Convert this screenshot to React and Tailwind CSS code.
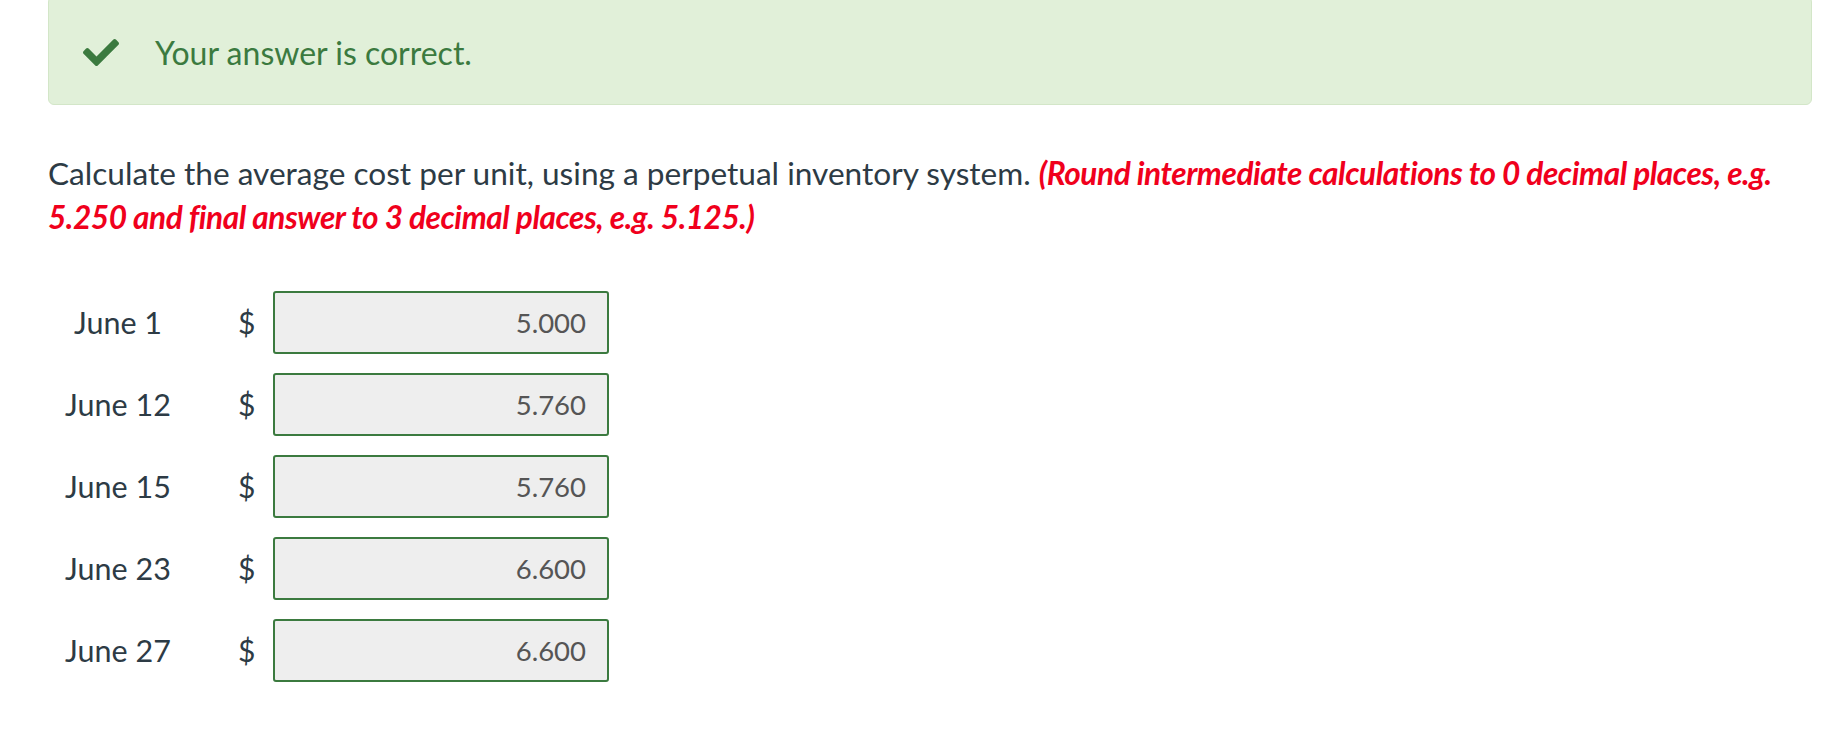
import React from 'react'

const rows = [
  { label: 'June 1', value: '5.000' },
  { label: 'June 12', value: '5.760' },
  { label: 'June 15', value: '5.760' },
  { label: 'June 23', value: '6.600' },
  { label: 'June 27', value: '6.600' },
]

function CheckIcon() {
  return (
    <svg viewBox="0 64 512 384" className="h-[27px] w-[36px]" fill="#3b7a3f">
      <path d="M173.898 439.404l-166.4-166.4c-9.997-9.997-9.997-26.206 0-36.204l36.203-36.204c9.997-9.998 26.207-9.998 36.204 0L192 312.69 432.095 72.596c9.997-9.997 26.207-9.997 36.204 0l36.203 36.204c9.997 9.997 9.997 26.206 0 36.204l-294.4 294.401c-9.998 9.997-26.207 9.997-36.204-.001z" />
    </svg>
  )
}

export default function App() {
  return (
    <div
      className="min-h-[740px] bg-white pl-[48px] pr-[34px] text-[#2d3b45]"
      style={{ fontFamily: 'Lato, "Noto Sans", sans-serif' }}
    >
      <div className="-mt-[4px] flex h-[109px] items-center rounded-[6px] border border-[#d3e6c8] bg-[#e1f0d9] pl-[34px] pt-[4px]">
        <CheckIcon />
        <span className="ml-[36px] text-[32px] text-[#3b7a3f]">Your answer is correct.</span>
      </div>

      <p className="mt-[46px] text-[31.6px] leading-[44px]">
        Calculate the average cost per unit, using a perpetual inventory system.{' '}
        <span className="font-bold italic tracking-[-0.45px] text-[#f0001c]">
          (Round intermediate calculations to 0 decimal places, e.g. 5.250 and final answer to 3 decimal places, e.g. 5.125.)
        </span>
      </p>

      <div className="mt-[52px] flex flex-col gap-[19px]">
        {rows.map((r) => (
          <div key={r.label} className="flex h-[63px] items-center">
            <div className="w-[140px] text-center text-[30.5px]">{r.label}</div>
            <div className="ml-[50px] w-[15px] text-[30px]">$</div>
            <div className="ml-[20px] flex h-[63px] w-[336px] items-center justify-end rounded-[3px] border-2 border-[#3b7a3f] bg-[#eeeeee] pr-[21px] text-[27.5px] text-[#555555]">
              {r.value}
            </div>
          </div>
        ))}
      </div>
    </div>
  )
}
